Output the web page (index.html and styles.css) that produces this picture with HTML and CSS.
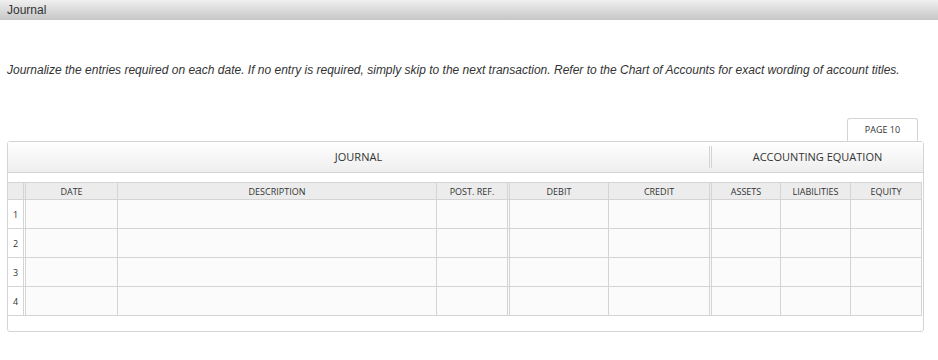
FILE: index.html
```html
<!DOCTYPE html>
<html>
<head>
    <meta charset="UTF-8">
    <title>Journal</title>
    <link rel="stylesheet" href="styles.css">
</head>
<body>
    <div class="titlebar">Journal</div>

    <p class="instructions">Journalize the entries required on each date. If no entry is required, simply skip to the next transaction. Refer to the Chart of Accounts for exact wording of account titles.</p>

    <div class="tabs">
        <div class="tab">PAGE 10</div>
    </div>

    <div class="card">
        <div class="band">
            <div class="band-journal">JOURNAL</div>
            <div class="band-equation">ACCOUNTING EQUATION</div>
        </div>

        <table class="journal">
            <thead>
                <tr>
                    <th class="num"></th>
                    <th class="date">DATE</th>
                    <th class="desc">DESCRIPTION</th>
                    <th class="ref split">POST. REF.</th>
                    <th class="debit">DEBIT</th>
                    <th class="credit split">CREDIT</th>
                    <th class="assets">ASSETS</th>
                    <th class="liab">LIABILITIES</th>
                    <th class="equity">EQUITY</th>
                </tr>
            </thead>
            <tbody>
                <tr><td class="num split">1</td><td></td><td></td><td class="split"></td><td></td><td class="split"></td><td></td><td></td><td></td></tr>
                <tr><td class="num split">2</td><td></td><td></td><td class="split"></td><td></td><td class="split"></td><td></td><td></td><td></td></tr>
                <tr><td class="num split">3</td><td></td><td></td><td class="split"></td><td></td><td class="split"></td><td></td><td></td><td></td></tr>
                <tr><td class="num split">4</td><td></td><td></td><td class="split"></td><td></td><td class="split"></td><td></td><td></td><td></td></tr>
            </tbody>
        </table>
    </div>
</body>
</html>
```

FILE: styles.css
```css
body {
    margin: 0;
    font-family: "Liberation Sans", Arial, sans-serif;
    color: #333;
    background: #fff;
}
.titlebar {
    height: 20px;
    line-height: 20px;
    padding-left: 7px;
    font-size: 12px;
    color: #333;
    background: linear-gradient(#f0f0f0, #c6c6c6);
}
.instructions {
    margin: 42px 7px 0;
    font-size: 12px;
    line-height: 16px;
    font-style: italic;
    color: #333;
}
.tabs {
    display: flex;
    justify-content: flex-end;
    margin: 40px 20px 0 0;
}
.tab {
    width: 69px;
    height: 22px;
    line-height: 22px;
    text-align: center;
    font-family: "Open Sans", sans-serif;
    font-size: 9px;
    background: #fff;
    border: 1px solid #d4d4d4;
    border-bottom: none;
    border-radius: 3px 3px 0 0;
}
.card {
    width: 915px;
    margin-left: 7px;
    padding-bottom: 15px;
    border: 1px solid #d4d4d4;
    border-radius: 3px;
    font-family: "Open Sans", sans-serif;
}
.band {
    display: flex;
    height: 30px;
    margin-bottom: 9px;
    border-bottom: 1px solid #d4d4d4;
    background: linear-gradient(#fff, #eeeeee);
    font-size: 11px;
    line-height: 30px;
}
.band-journal {
    width: 701px;
    text-align: center;
    margin: 4px 0;
    line-height: 22px;
    border-right: 3px double #d4d4d4;
}
.band-equation {
    flex: 1;
    text-align: center;
}
.journal {
    width: 914px;
    table-layout: fixed;
    border-collapse: separate;
    border-spacing: 0;
    border-top: 1px solid #d4d4d4;
}
.journal th,
.journal td {
    box-sizing: border-box;
    padding: 0;
    border-right: 1px solid #d4d4d4;
    border-bottom: 1px solid #d4d4d4;
    font-weight: normal;
    text-align: center;
}
.journal th {
    height: 17px;
    font-size: 9px;
    background: #ececec;
}
.journal td {
    height: 29px;
    background: #fbfbfb;
}
.journal .split,
.journal .num {
    border-right: 3px double #d4d4d4;
}
.journal td.num {
    font-size: 9px;
    background: #fff;
}
.num { width: 18px; }
.date { width: 92px; }
.desc { width: 319px; }
.ref { width: 73px; }
.debit { width: 99px; }
.credit { width: 103px; }
.assets { width: 69px; }
.liab { width: 70px; }
.equity { width: 71px; }
```
